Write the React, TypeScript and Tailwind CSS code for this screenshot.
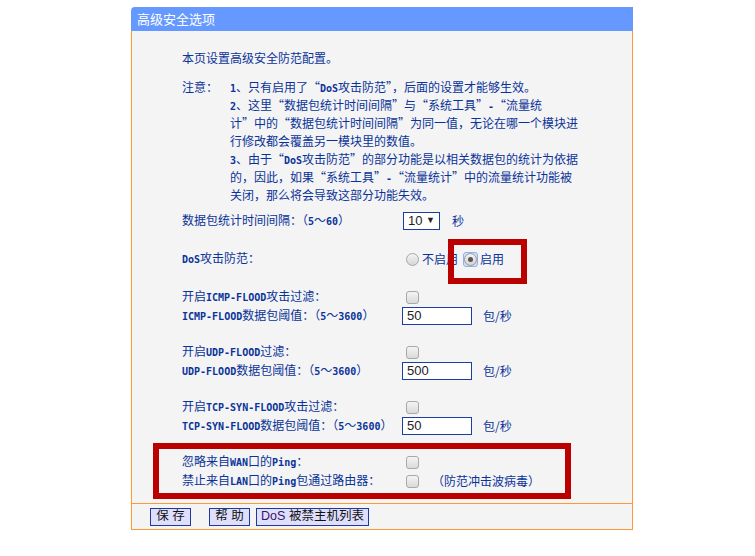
import React from "react";

const CJK = { fontFamily: '"Noto Sans CJK SC", "Noto Sans", sans-serif' };
const SANS = { fontFamily: '"Liberation Sans", "Noto Sans CJK SC", sans-serif' };
const MONO = { fontFamily: '"DejaVu Sans Mono", "Liberation Mono", monospace' };

function T({ s }: { s: string }) {
  const parts = s.split(/([\x21-\x7E]+)/);
  return (
    <>
      {parts.map((p, i) =>
        /^[\x21-\x7E]+$/.test(p) ? (
          <span key={i} className="text-[10px] font-bold" style={MONO}>
            {p}
          </span>
        ) : (
          <React.Fragment key={i}>{p}</React.Fragment>
        )
      )}
    </>
  );
}

function Checkbox() {
  return (
    <span className="ml-[4px] inline-block h-[13px] w-[13px] shrink-0 rounded-[3px] border border-[#a8a8a8] bg-gradient-to-b from-[#f4f4f4] to-[#dadada]" />
  );
}

function Radio({ checked }: { checked?: boolean }) {
  if (checked) {
    return (
      <span className="flex h-[15px] w-[15px] shrink-0 items-center justify-center rounded-[3px] border border-[#8fb2ec] bg-[#cfe0fb]">
        <span className="flex h-[13px] w-[13px] items-center justify-center rounded-full border border-[#9a9a9a] bg-gradient-to-b from-[#f2f2f2] to-[#d4d4d4]">
          <span className="h-[5px] w-[5px] rounded-full bg-[#555]" />
        </span>
      </span>
    );
  }
  return (
    <span className="ml-[4px] inline-block h-[13px] w-[13px] shrink-0 rounded-full border border-[#a8a8a8] bg-gradient-to-b from-[#f4f4f4] to-[#d6d6d6]" />
  );
}

function TextInput({ value }: { value: string }) {
  return (
    <div
      className="flex h-[18px] w-[70px] shrink-0 items-center border border-[#1b3ea3] bg-white pl-[4px] text-[13px] text-[#222]"
      style={SANS}
    >
      {value}
    </div>
  );
}

function Row({
  label,
  children,
  className = "",
}: {
  label: string;
  children?: React.ReactNode;
  className?: string;
}) {
  return (
    <div className={`flex h-[18px] items-center ${className}`}>
      <div className="w-[220px] shrink-0 whitespace-nowrap text-[12px] leading-[18px]">
        <T s={label} />
      </div>
      <div className="flex items-center">{children}</div>
    </div>
  );
}

function Btn({ children, w }: { children: React.ReactNode; w: string }) {
  return (
    <div
      className={`flex h-[18px] items-center justify-center whitespace-nowrap border border-[#1c3b9c] bg-[#dfdffd] text-[12.5px] leading-none text-[#111] ${w}`}
      style={SANS}
    >
      {children}
    </div>
  );
}

export default function App() {
  const noteLines = [
    "1、只有启用了“DoS攻击防范”，后面的设置才能够生效。",
    "2、这里“数据包统计时间间隔”与“系统工具”-“流量统",
    "计”中的“数据包统计时间间隔”为同一值，无论在哪一个模块进",
    "行修改都会覆盖另一模块里的数值。",
    "3、由于“DoS攻击防范”的部分功能是以相关数据包的统计为依据",
    "的，因此，如果“系统工具”-“流量统计”中的流量统计功能被",
    "关闭，那么将会导致这部分功能失效。",
  ];

  return (
    <div className="min-h-screen bg-white pt-[7px]">
      <div className="ml-[131px] w-[502px]" style={CJK}>
        {/* header */}
        <div className="flex h-[24px] items-center rounded-tl-[4px] bg-[#6699ff] pl-[6px] text-[13px] text-white">
          高级安全选项
        </div>

        {/* body */}
        <div className="h-[472px] border-x border-[#ff9933] bg-[#f4f4f4] pl-[50px] pt-[18px] text-[#0a3399]">
          <div className="h-[18px] text-[12px] leading-[18px]">本页设置高级安全防范配置。</div>

          <div className="mt-[11px] flex text-[12px] leading-[18px]">
            <div className="w-[48px] shrink-0">注意：</div>
            <div className="flex flex-col">
              {noteLines.map((l, i) => (
                <div key={i} className="h-[18px] whitespace-nowrap">
                  <T s={l} />
                </div>
              ))}
            </div>
          </div>

          <Row label="数据包统计时间间隔：（5～60）" className="mt-[8px]">
            <div
              className="ml-[1px] flex h-[18px] w-[37px] items-center justify-between border border-[#1b3ea3] bg-white pl-[4px] pr-[4px] text-[13px] text-[#222]"
              style={SANS}
            >
              <span>10</span>
              <span className="text-[9px]">▼</span>
            </div>
            <span className="ml-[12px] text-[12px]">秒</span>
          </Row>

          <div className="relative mt-[20px]">
            <Row label="DoS攻击防范：">
              <Radio />
              <span className="ml-[3px] text-[12px]">不启用</span>
              <span className="ml-[5px]">
                <Radio checked />
              </span>
              <span className="ml-[2px] text-[12px]">启用</span>
            </Row>
            <div className="pointer-events-none absolute left-[266px] top-[-11px] h-[45px] w-[79px] border-[6px] border-[#bb0000]" />
          </div>

          <Row label="开启ICMP-FLOOD攻击过滤：" className="mt-[20px]">
            <Checkbox />
          </Row>
          <Row label="ICMP-FLOOD数据包阈值：（5～3600）" className="mt-[1px]">
            <TextInput value="50" />
            <span className="ml-[11px] text-[12px]">包/秒</span>
          </Row>

          <Row label="开启UDP-FLOOD过滤：" className="mt-[18px]">
            <Checkbox />
          </Row>
          <Row label="UDP-FLOOD数据包阈值：（5～3600）" className="mt-[1px]">
            <TextInput value="500" />
            <span className="ml-[11px] text-[12px]">包/秒</span>
          </Row>

          <Row label="开启TCP-SYN-FLOOD攻击过滤：" className="mt-[18px]">
            <Checkbox />
          </Row>
          <Row label="TCP-SYN-FLOOD数据包阈值：（5～3600）" className="mt-[1px]">
            <TextInput value="50" />
            <span className="ml-[11px] text-[12px]">包/秒</span>
          </Row>

          <div className="relative mt-[18px]">
            <Row label="忽略来自WAN口的Ping：">
              <Checkbox />
            </Row>
            <Row label="禁止来自LAN口的Ping包通过路由器：" className="mt-[1px]">
              <Checkbox />
              <span className="ml-[13px] text-[12px]">（防范冲击波病毒）</span>
            </Row>
            <div className="pointer-events-none absolute left-[-29px] top-[-10px] h-[56px] w-[418px] border-[6px] border-[#bb0000]" />
          </div>
        </div>

        {/* footer */}
        <div className="flex h-[27px] items-center border-x border-y border-[#ff9933] bg-[#f4f4f4] pl-[18px]">
          <Btn w="w-[41px]">保 存</Btn>
          <div className="ml-[18px]">
            <Btn w="w-[41px]">帮 助</Btn>
          </div>
          <div className="ml-[6px]">
            <Btn w="w-[113px]">
              <span className="text-[#3a1268]">DoS</span>&nbsp;被禁主机列表
            </Btn>
          </div>
        </div>
      </div>
    </div>
  );
}
